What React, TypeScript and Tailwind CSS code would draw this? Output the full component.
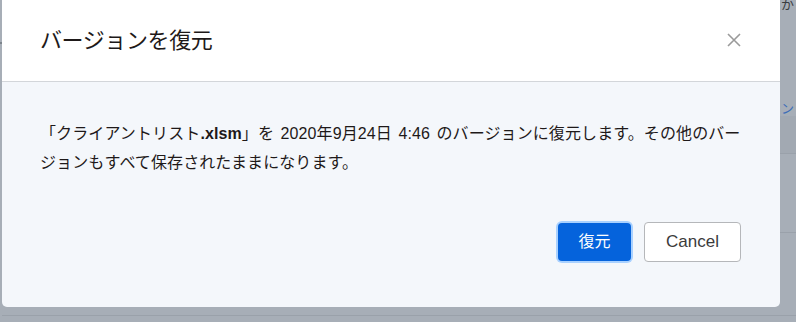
import React from "react";

const font = { fontFamily: '"Liberation Sans", "Noto Sans CJK JP", sans-serif' };

export default function App() {
  return (
    <div className="w-[796px] h-[322px] bg-[#a7aeb7] flex overflow-hidden" style={font}>
      {/* left sliver */}
      <div className="w-[2px] flex flex-col">
        <div className="h-[42px]" />
        <div className="h-[2px] bg-[#7d848c]" />
      </div>
      {/* dialog column */}
      <div className="w-[778px] flex flex-col">
        <div className="h-[307px] bg-[#f4f7fb] rounded-b-[5px] flex flex-col overflow-hidden">
          <div className="h-[82px] bg-white border-b border-[#d3d6da] px-[38px] flex items-center justify-between">
            <h1 className="text-[22px] leading-[30px] text-[#1e1919] tracking-[-0.4px] pt-[1px]">バージョンを復元</h1>
            <svg width="14" height="14" viewBox="0 0 14 14" className="mr-[1px] mt-[-1px]">
              <path d="M1 1 L13 13 M13 1 L1 13" stroke="#9a9a9a" strokeWidth="1.6" />
            </svg>
          </div>
          <div className="px-[38px] pt-[37px] flex flex-col">
            <p className="text-[16px] leading-[29px] text-[#1e1919] w-[702px] tracking-[0.1px] [word-spacing:2px]">
              「クライアントリスト<b>.xlsm</b>」を 2020年9月24日 4:46 のバージョンに復元します。その他のバージョンもすべて保存されたままになります。
            </p>
            <div className="flex justify-end items-center gap-[13px] mt-[45px] mr-[1px]">
              <button className="w-[73px] h-[38px] rounded-[4px] bg-[#0563dc] text-white text-[16px] shadow-[0_0_0_2px_#a9d1ff]">
                復元
              </button>
              <button className="w-[97px] h-[40px] rounded-[4px] bg-white border border-[#b5b7ba] text-[#3b3b3b] text-[17px]">
                Cancel
              </button>
            </div>
          </div>
        </div>
        <div className="h-[8px]" />
        <div className="h-[1px] bg-[#9aa1aa]" />
      </div>
      {/* right sliver of page behind overlay */}
      <div className="w-[16px] flex flex-col">
        <div className="h-[12px] text-[13px] leading-[10px] text-[#3a3d42] pl-[1px] overflow-hidden">か</div>
        <div className="h-[90px]" />
        <div className="h-[14px] text-[13px] leading-[14px] text-[#3f6fb8] pl-[1px] overflow-hidden">ン</div>
        <div className="h-[37px] bg-[#a2a9b2]" />
        <div className="h-[1px] bg-[#9aa1aa]" />
        <div className="h-[78px]" />
        <div className="h-[1px] bg-[#9aa1aa]" />
        <div className="h-[82px]" />
        <div className="h-[1px] bg-[#9aa1aa]" />
      </div>
    </div>
  );
}
